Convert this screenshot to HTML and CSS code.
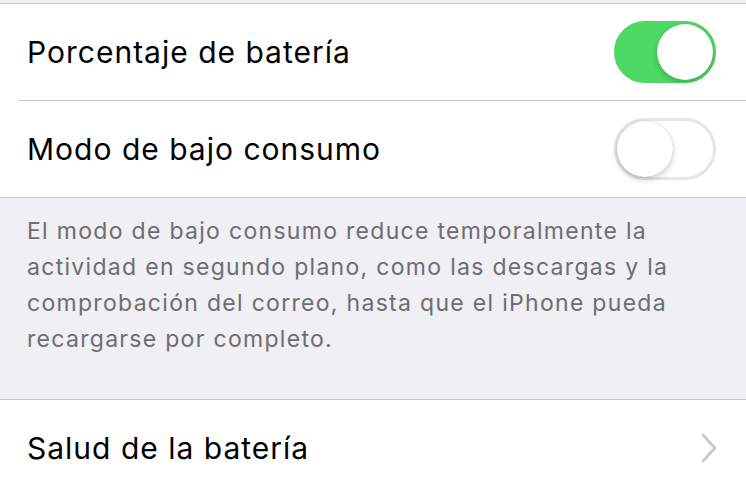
FILE: index.html
```html
<!DOCTYPE html>
<html lang="es">
<head>
    <meta charset="UTF-8">
    <meta name="viewport" content="width=device-width, initial-scale=1.0">
    <title>Batería</title>
    <link rel="stylesheet" href="styles.css">
</head>
<body>
    <div class="top-gap"></div>

    <div class="group">
        <div class="row">
            <div class="row-inner">
                <span class="label">Porcentaje de batería</span>
                <div class="switch on"><div class="knob"></div></div>
            </div>
        </div>
        <div class="row last">
            <div class="row-inner">
                <span class="label">Modo de bajo consumo</span>
                <div class="switch"><div class="knob"></div></div>
            </div>
        </div>
    </div>

    <div class="footer">
        El modo de bajo consumo reduce temporalmente la actividad en segundo plano, como las descargas y la comprobación del correo, hasta que el iPhone pueda recargarse por completo.
    </div>

    <div class="group">
        <div class="row last">
            <div class="row-inner">
                <span class="label">Salud de la batería</span>
                <svg class="chevron" width="18" height="32" viewBox="0 0 18 32">
                    <path d="M3 3 L15 16 L3 29" fill="none" stroke="#c7c7cc" stroke-width="2.6" stroke-linecap="round" stroke-linejoin="round"/>
                </svg>
            </div>
        </div>
    </div>
</body>
</html>
```

FILE: styles.css
```css
body {
    margin: 0;
    background-color: #fff;
    font-family: Inter, Roboto, "Liberation Sans", sans-serif;
    color: #000;
}

.top-gap {
    height: 3px;
    background-color: #efeff4;
    border-bottom: 1px solid #c8c7cc;
}

.group {
    background-color: #fff;
    border-bottom: 1px solid #c8c7cc;
}

.row {
    padding-left: 18px;
}

.row-inner {
    display: flex;
    align-items: center;
    justify-content: space-between;
    height: 96px;
    padding-left: 9px;
    padding-right: 30px;
    border-bottom: 1px solid #c8c7cc;
}

.row.last .row-inner {
    border-bottom: none;
}

.label {
    font-size: 30px;
    letter-spacing: 1px;
}

.switch {
    position: relative;
    width: 102px;
    height: 62px;
    box-sizing: border-box;
    border-radius: 31px;
    border: 3px solid #e5e5ea;
    background-color: #fff;
}

.switch.on {
    background-color: #4cd964;
    border-color: #4cd964;
}

.knob {
    position: absolute;
    top: 0;
    left: 0;
    width: 56px;
    height: 56px;
    border-radius: 50%;
    background-color: #fff;
    box-shadow: 0 3px 6px rgba(0, 0, 0, 0.18), 0 0 1px rgba(0, 0, 0, 0.25);
}

.switch.on .knob {
    left: 40px;
}

.footer {
    background-color: #efeff4;
    color: #6d6d72;
    font-size: 23px;
    letter-spacing: 1.3px;
    line-height: 36px;
    padding: 15px 40px 42px 27px;
    border-bottom: 1px solid #c8c7cc;
}

.chevron {
    margin-right: -2px;
}
```
